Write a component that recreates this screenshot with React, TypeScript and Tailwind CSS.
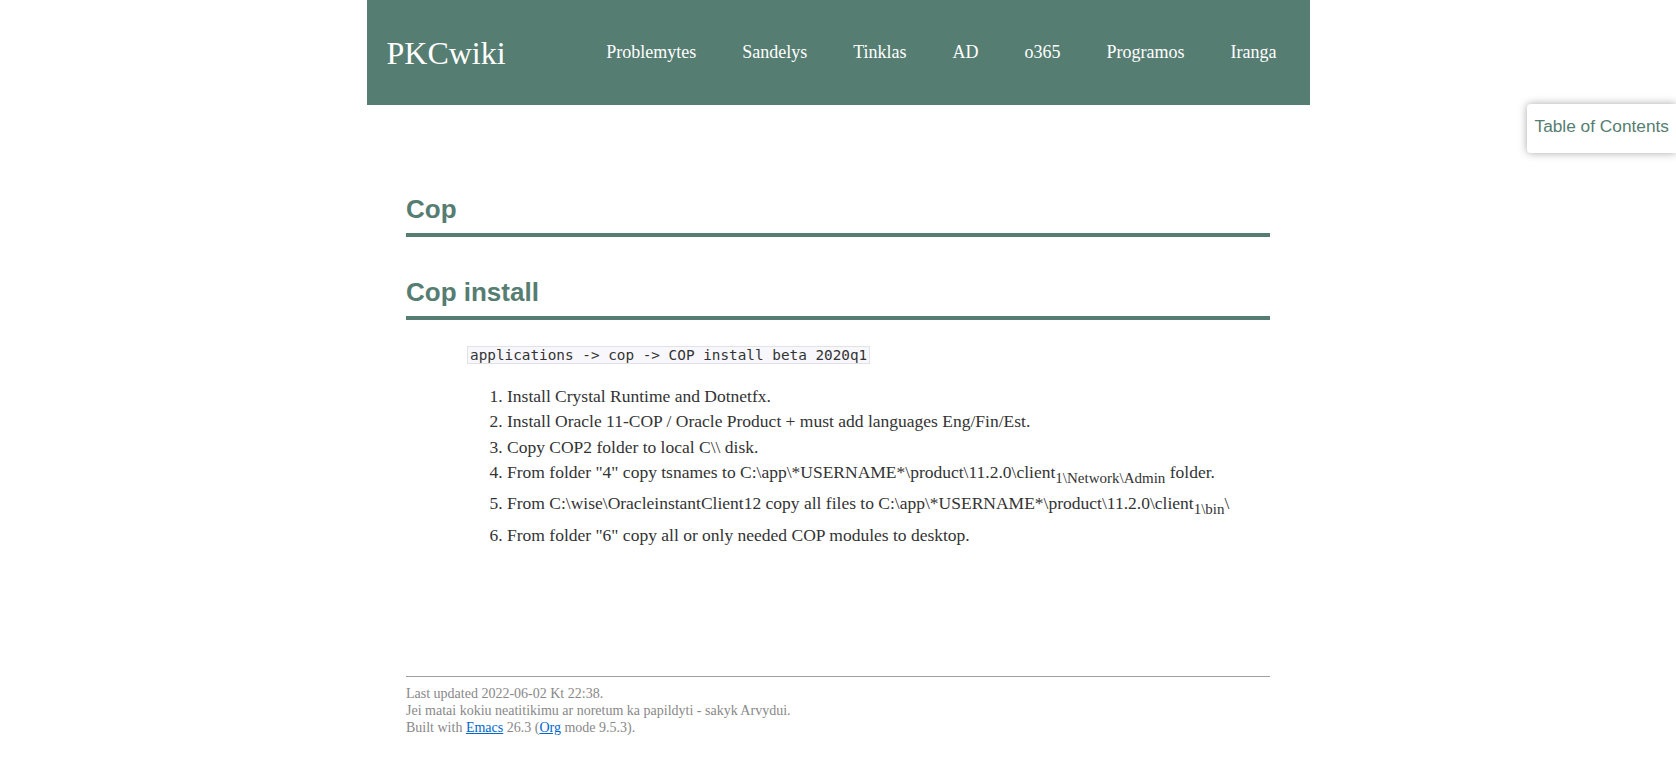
export default function App() {
  const nav = ["Problemytes", "Sandelys", "Tinklas", "AD", "o365", "Programos", "Iranga"];
  const headCls =
    "border-b-4 border-[#567d71] pb-[10px] font-['Liberation_Sans',Arial,sans-serif] text-[26px] font-bold leading-[28px] text-[#567d71]";
  const subCls = "static align-sub text-[15px] leading-[inherit]";
  return (
    <div className="relative min-h-screen bg-white font-['Liberation_Serif','Times_New_Roman',serif] text-[#333]">
      <header className="mx-auto flex h-[105px] w-[943px] items-center bg-[#567d71] pl-[20px] pr-[33px] text-white">
        <div className="text-[32px]">PKCwiki</div>
        <nav className="ml-auto flex gap-[46px] text-[18px]">
          {nav.map((n) => (
            <a key={n} className="text-white">
              {n}
            </a>
          ))}
        </nav>
      </header>

      <div className="absolute right-0 top-[104px] rounded-l-[4px] bg-white pb-[13px] pl-[8px] pr-[7px] pt-[10px] font-['Liberation_Sans',Arial,sans-serif] text-[17.3px] text-[#567d71] shadow-[0_0_8px_rgba(0,0,0,0.35)]">
        Table of Contents
      </div>

      <main className="mx-auto w-[864px]">
        <h2 className={"mt-[90px] " + headCls}>Cop</h2>
        <h3 className={"mt-[41px] " + headCls}>Cop install</h3>
        <div className="pl-[61px] text-[17.5px] leading-[25.6px]">
          <p className="mt-[22px]">
            <code className="rounded-none border border-[#e1e1e8] bg-[#f8f8fc] px-[2px] font-['DejaVu_Sans_Mono',monospace] text-[14.35px] text-[#333]">
              applications -&gt; cop -&gt; COP install beta 2020q1
            </code>
          </p>
          <ol className="mt-[15px] list-decimal pl-[40px]">
            <li>Install Crystal Runtime and Dotnetfx.</li>
            <li>Install Oracle 11-COP / Oracle Product + must add languages Eng/Fin/Est.</li>
            <li>Copy COP2 folder to local C\\ disk.</li>
            <li>
              From folder "4" copy tsnames to C:\app\*USERNAME*\product\11.2.0\client
              <sub className={subCls}>1\Network\Admin</sub> folder.
            </li>
            <li>
              From C:\wise\OracleinstantClient12 copy all files to C:\app\*USERNAME*\product\11.2.0\client
              <sub className={subCls}>1\bin</sub>\
            </li>
            <li>From folder "6" copy all or only needed COP modules to desktop.</li>
          </ol>
        </div>
      </main>

      <footer className="mx-auto mt-[128px] w-[864px]">
        <div className="border-t border-[#a0a0a0]" />
        <div className="pt-[8px] text-[14px] leading-[17px] text-[#888]">
          <p>Last updated 2022-06-02 Kt 22:38.</p>
          <p>Jei matai kokiu neatitikimu ar noretum ka papildyti - sakyk Arvydui.</p>
          <p>
            Built with{" "}
            <a className="text-[#0066cc] underline">Emacs</a> 26.3 (
            <a className="text-[#0066cc] underline">Org</a> mode 9.5.3).
          </p>
        </div>
      </footer>
    </div>
  );
}
